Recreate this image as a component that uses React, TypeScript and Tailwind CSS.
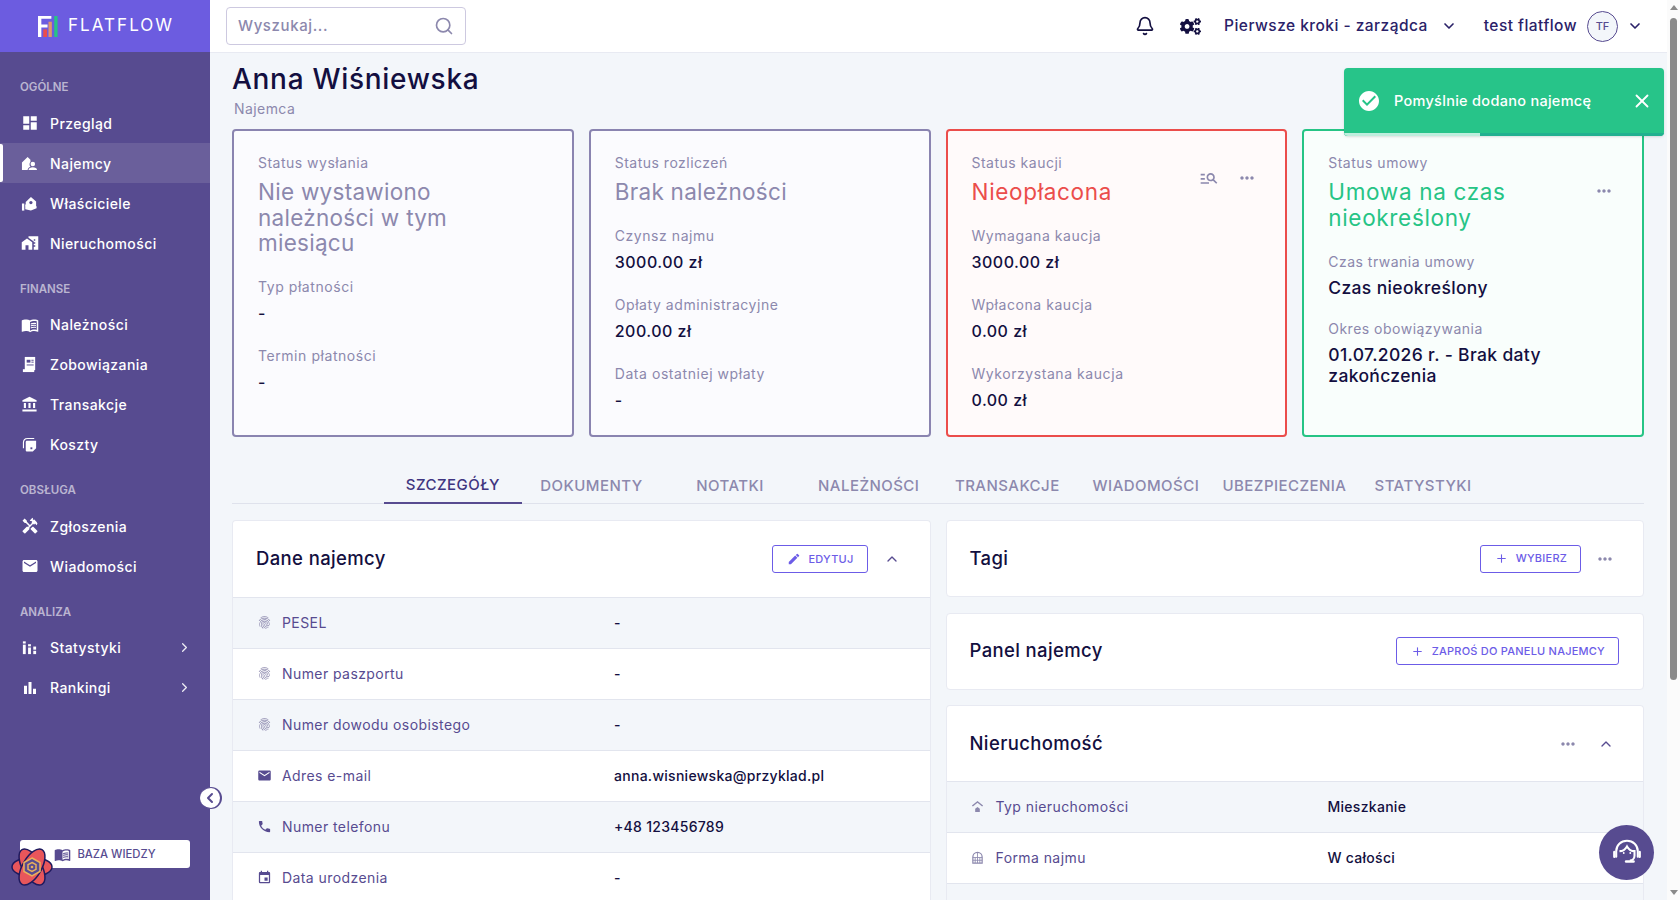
import { Bell, ChevronDown, ChevronLeft, ChevronRight, ChevronUp, Plus, Search, X } from "lucide-react";
import { FaCogs } from "react-icons/fa";
import {
  MdAccountBalance,
  MdBarChart,
  MdCheckCircle,
  MdDashboard,
  MdEdit,
  MdEmail,
  MdEvent,
  MdFingerprint,
  MdHandyman,
  MdHomeWork,
  MdManageSearch,
  MdMenuBook,
  MdMoreHoriz,
  MdPhone,
} from "react-icons/md";
import type { ReactNode } from "react";

const TenantIcon = () => (
  <svg viewBox="0 0 18 18" className="w-[17px] h-[17px]" fill="white">
    <path d="M1 16V8l6-6 3 3v2.5a3.4 3.4 0 0 0-1 2.5c0 1 .4 1.8 1 2.4-1.6.5-3 1.6-3 3.6z" />
    <circle cx="12.5" cy="9.5" r="2.4" />
    <path d="M8 16c0-2 2.2-3 4.5-3s4.5 1 4.5 3z" />
  </svg>
);

const OwnerIcon = () => (
  <svg viewBox="0 0 18 18" className="w-[17px] h-[17px]" fill="white">
    <path d="M5 7.5 10.5 2 16 7v6l-6 1.5L5 12z" />
    <circle cx="10.5" cy="8" r="1.7" fill="#574b90" />
    <rect x="1" y="9" width="2.5" height="7.5" />
    <path d="M4.5 10h3l4 2h5v2l-6 2.5-6-1.5z" />
  </svg>
);

const BillIcon = () => (
  <svg viewBox="0 0 18 18" className="w-[17px] h-[17px]" fill="white">
    <path d="M4 1h11v14H4z" />
    <rect x="6" y="4" width="4" height="3" fill="#574b90" />
    <rect x="11" y="4" width="2.4" height="1" fill="#574b90" />
    <rect x="11" y="6" width="2.4" height="1" fill="#574b90" />
    <rect x="6" y="9" width="7.4" height="1" fill="#574b90" />
    <path d="M2 14h12v3H2z" />
  </svg>
);

const CostIcon = () => (
  <svg viewBox="0 0 18 18" className="w-[17px] h-[17px]" fill="white">
    <path d="M2 7c0-3 1.500-5 5-5h7v1.300H7C4.500 3.300 3.200 5 3.200 7v6H2z" />
    <path d="M5 6.500c0-1 .6-1.500 1.500-1.500H16v8l-3.500 3.500H6.500C5.600 16.500 5 16 5 15z" />
    <rect x="10" y="12" width="2" height="2" fill="#574b90" />
  </svg>
);

const StatsIcon = () => (
  <svg viewBox="0 0 18 18" className="w-[17px] h-[17px]" fill="white">
    <rect x="2" y="6" width="3" height="10" />
    <rect x="2" y="2.500" width="3" height="2.300" />
    <rect x="7.500" y="9" width="3" height="7" />
    <rect x="7.500" y="5.500" width="3" height="2.300" />
    <rect x="13" y="12.500" width="3" height="3.500" />
    <rect x="13" y="8" width="3" height="3.300" />
  </svg>
);

const Logo = () => (
  <svg viewBox="0 0 22 22" className="w-[21px] h-[21px]">
    <path d="M0 0h14v3H3.500v6H10v3H3.500v10H0z" fill="white" />
    <rect x="5.500" y="14" width="4" height="8" fill="#eb4d4b" />
    <rect x="11" y="6" width="3.500" height="16" fill="#e4946a" />
    <rect x="17" y="0" width="3.500" height="22" fill="#26c485" />
  </svg>
);

const Flower = () => (
  <svg viewBox="0 0 44 44" className="w-[44px] h-[44px]">
    <g fill="#e8565b" stroke="#1f1a5e" strokeWidth="1.500">
      <ellipse cx="22" cy="22" rx="20" ry="9.500" />
      <ellipse cx="22" cy="22" rx="20" ry="9.500" transform="rotate(60 22 22)" />
      <ellipse cx="22" cy="22" rx="20" ry="9.500" transform="rotate(120 22 22)" />
    </g>
    <circle cx="22" cy="22" r="9" fill="#e8565b" />
    <path d="M22 13l8 4.500v9L22 31l-8-4.500v-9z" fill="#574b90" stroke="#e9b15c" strokeWidth="1.500" />
    <path d="M22 17.500l4 2.200v4.600l-4 2.200-4-2.200v-4.600z" fill="none" stroke="#e9b15c" strokeWidth="1.500" />
    <circle cx="22" cy="22" r="1.300" fill="#e9b15c" />
  </svg>
);

const SupportIcon = () => (
  <svg viewBox="0 0 32 32" className="w-[30px] h-[30px]" fill="none" stroke="white" strokeWidth="2.200">
    <path d="M4.500 20V14C4.500 7.500 9.500 3 16 3s11.500 4.500 11.500 11v6" strokeLinecap="round" />
    <path d="M8 14c3.500 0 6-1.500 8-5 2 3.500 4.500 5 8 5v5c0 2.500-2 5-5 5" />
    <path d="M2.500 15v5M29.500 15v5" strokeLinecap="round" strokeWidth="2.600" />
    <path d="M15 25h8" strokeLinecap="round" strokeWidth="2.600" />
    <circle cx="12.500" cy="16" r="1" fill="white" stroke="none" />
    <circle cx="19.500" cy="16" r="1" fill="white" stroke="none" />
  </svg>
);

const PropertyTypeIcon = () => (
  <svg viewBox="0 0 14 14" className="w-[13px] h-[13px]" fill="#8c88ad">
    <path d="M7 1 1 6l1 1 5-4 5 4 1-1z" />
    <path d="M7 7.500 4.500 9.500V13h5V9.500z" />
  </svg>
);

const RentFormIcon = () => (
  <svg viewBox="0 0 14 14" className="w-[13px] h-[13px]" fill="none" stroke="#8c88ad" strokeWidth="1.300">
    <path d="M2 13V6.500a5 5 0 0 1 10 0V13z" />
    <path d="M7 2v11M2 7h10M2 10h10M4.500 7v6M9.500 7v6" strokeWidth="0.900" />
  </svg>
);

type NavItem = { icon: ReactNode; label: string; active?: boolean; more?: boolean };

const navSections: { title: string; items: NavItem[] }[] = [
  {
    title: "OGÓLNE",
    items: [
      { icon: <MdDashboard size={18} />, label: "Przegląd" },
      { icon: <TenantIcon />, label: "Najemcy", active: true },
      { icon: <OwnerIcon />, label: "Właściciele" },
      { icon: <MdHomeWork size={18} />, label: "Nieruchomości" },
    ],
  },
  {
    title: "FINANSE",
    items: [
      { icon: <MdMenuBook size={18} />, label: "Należności" },
      { icon: <BillIcon />, label: "Zobowiązania" },
      { icon: <MdAccountBalance size={17} />, label: "Transakcje" },
      { icon: <CostIcon />, label: "Koszty" },
    ],
  },
  {
    title: "OBSŁUGA",
    items: [
      { icon: <MdHandyman size={18} />, label: "Zgłoszenia" },
      { icon: <MdEmail size={18} />, label: "Wiadomości" },
    ],
  },
  {
    title: "ANALIZA",
    items: [
      { icon: <StatsIcon />, label: "Statystyki", more: true },
      { icon: <MdBarChart size={18} />, label: "Rankingi", more: true },
    ],
  },
];

const tabs = ["SZCZEGÓŁY", "DOKUMENTY", "NOTATKI", "NALEŻNOŚCI", "TRANSAKCJE", "WIADOMOŚCI", "UBEZPIECZENIA", "STATYSTYKI"];

function Sidebar() {
  return (
    <aside className="w-[210px] shrink-0 h-full flex flex-col bg-[#574b90] relative z-10">
      <div className="h-[52px] shrink-0 bg-[#6c5ce0] flex items-center pl-[38px] gap-[9px]">
        <Logo />
        <span className="text-white text-[17px] tracking-[0.12em] font-normal">FLATFLOW</span>
      </div>
      <nav className="flex flex-col pt-[28px]">
        {navSections.map((section) => (
          <div key={section.title} className="mb-[18.500px]">
            <div className="h-[16px] flex items-center pl-[20px] text-[11.500px] font-semibold text-white/60 mb-[7px]">
              {section.title}
            </div>
            {section.items.map((item) => (
              <div
                key={item.label}
                className={`relative h-[40px] flex items-center pl-[21px] pr-[18px] text-white text-[14px] font-medium ${
                  item.active ? "bg-[#6a5f9b]" : ""
                }`}
              >
                {item.active && <span className="absolute left-0 top-px bottom-px w-[3px] bg-white rounded-r-[2px]" />}
                <span className="w-[29px] flex items-center">{item.icon}</span>
                <span className="flex-1 tracking-[0.03em]">{item.label}</span>
                {item.more && <ChevronRight className="w-[15px] h-[15px] text-white/90" />}
              </div>
            ))}
          </div>
        ))}
      </nav>
      <div className="mt-auto mb-[32px] mx-[20px] h-[28px] relative bg-white rounded-[3px] flex items-center justify-center gap-[6px] text-[#574b90] text-[11.300px] font-medium">
        <MdMenuBook size={17} />
        BAZA WIEDZY
        <span className="absolute -left-[10px] top-[5px]">
          <Flower />
        </span>
      </div>
      <button className="absolute right-[-12px] top-[787px] w-[22px] h-[22px] rounded-full bg-white border-r-2 border-b border-t border-[#574b90] flex items-center justify-center text-[#574b90]">
        <ChevronLeft className="w-[16px] h-[16px]" strokeWidth={3} />
      </button>
    </aside>
  );
}

function TopBar() {
  return (
    <header className="h-[53px] shrink-0 bg-white border-b border-[#e8eaf2] flex items-center pl-[16px] pr-[24px]">
      <div className="w-[240px] h-[38px] border border-[#cdc9e0] rounded-[4px] flex items-center justify-between pl-[11px] pr-[11px]">
        <span className="text-[15px] tracking-[0.04em] font-medium text-[#8c88ad]">Wyszukaj...</span>
        <Search className="w-[20px] h-[20px] text-[#8c88ad]" />
      </div>
      <div className="ml-auto flex items-center text-[#2a2168] text-[15.500px] font-medium">
        <Bell className="w-[20px] h-[20px] text-[#130f40]" />
        <FaCogs className="ml-[25px] w-[21px] h-[21px] text-[#130f40]" />
        <span className="ml-[23px] tracking-[0.03em]">Pierwsze kroki - zarządca</span>
        <ChevronDown className="ml-[13px] w-[16px] h-[16px]" strokeWidth={2.500} />
        <span className="ml-[27px] tracking-[0.03em]">test flatflow</span>
        <span className="ml-[10px] w-[31px] h-[31px] rounded-full border border-[#574b90] bg-[#f3f6fa] flex items-center justify-center text-[11px] font-medium text-[#574b90]">
          TF
        </span>
        <ChevronDown className="ml-[9px] w-[16px] h-[16px]" strokeWidth={2.500} />
      </div>
    </header>
  );
}

function Field({ label, value, large }: { label: string; value: string; large?: boolean }) {
  if (large) {
    return (
      <div className="mt-[20px]">
        <div className="text-[14px] leading-[21px] tracking-[0.035em] text-[#8c88ad]">{label}</div>
        <div className="mt-[5px] text-[17.500px] leading-[21px] tracking-[0.02em] font-medium text-[#130f40]">{value}</div>
      </div>
    );
  }
  return (
    <div className="mt-[19px]">
      <div className="text-[14px] leading-[21px] tracking-[0.04em] text-[#8c88ad]">{label}</div>
      <div className="mt-[4px] text-[16px] leading-[25px] tracking-[0.03em] font-medium text-[#130f40]">{value}</div>
    </div>
  );
}

function StatusCard({
  label,
  title,
  titleClass,
  border,
  bg,
  actions,
  children,
}: {
  label: string;
  title: ReactNode;
  titleClass: string;
  border: string;
  bg: string;
  actions?: ReactNode;
  children: ReactNode;
}) {
  return (
    <div className={`h-[308px] border-2 rounded-[4px] pl-[24px] pr-[28px] pt-[21px] ${border} ${bg}`}>
      <div className="flex items-center justify-between pb-px">
        <div>
          <div className="text-[14px] leading-[21px] tracking-[0.035em] text-[#8c88ad]">{label}</div>
          <div className={`mt-[6px] text-[22.500px] leading-[25.500px] font-normal ${titleClass}`}>{title}</div>
        </div>
        {actions}
      </div>
      {children}
    </div>
  );
}

function Dots() {
  return <MdMoreHoriz size={20} className="text-[#8c88ad]" />;
}

function OutlineButton({ icon, children }: { icon: ReactNode; children: ReactNode }) {
  return (
    <button className="h-[28px] pl-[14px] pr-[13px] border border-[#6c5ce7] rounded-[3px] flex items-center gap-[8px] text-[#6c5ce7] text-[11px] font-medium tracking-[0.02em]">
      {icon}
      {children}
    </button>
  );
}

function PanelHeader({ title, compact, children }: { title: string; compact?: boolean; children?: ReactNode }) {
  return (
    <div className={`${compact ? "h-[75px]" : "h-[76px]"} flex items-center justify-between pl-[23px] pr-[24px]`}>
      <h2 className="text-[18.500px] font-medium text-[#130f40] tracking-[0.02em]">{title}</h2>
      <div className="flex items-center">{children}</div>
    </div>
  );
}

function Row({ icon, label, value, alt }: { icon: ReactNode; label: string; value: string; alt?: boolean }) {
  return (
    <div className={`h-[51px] shrink-0 flex items-center border-t border-[#e2e5ee] ${alt ? "bg-[#f3f6fa]" : "bg-white"}`}>
      <div className="w-[381px] shrink-0 pl-[24px] pb-px flex items-center text-[14px] text-[#574b90]">
        <span className="w-[25px] flex items-center">{icon}</span>
        <span className="tracking-[0.03em]">{label}</span>
      </div>
      <span className="pb-px text-[14px] font-medium text-[#130f40] tracking-[0.02em]">{value}</span>
    </div>
  );
}

const fingerprint = <MdFingerprint size={15} className="text-[#8c88ad]" />;

export default function App() {
  return (
    <div className="w-full h-screen flex overflow-hidden relative bg-[#f3f6fa] font-['Inter',sans-serif]">
      <Sidebar />
      <div className="flex-1 min-w-0 flex flex-col h-full">
        <TopBar />
        <main className="flex-1 min-h-0 overflow-hidden pl-[22px] pr-[23px] pt-[6px]">
          <h1 className="mb-px text-[28px] leading-[40px] font-medium text-[#130f40] tracking-[0.025em]">Anna Wiśniewska</h1>
          <div className="text-[14px] leading-[18px] tracking-[0.03em] text-[#8c88ad] pl-[2px]">Najemca</div>

          <section className="mt-[11px] grid grid-cols-4 gap-[15px]">
            <StatusCard
              label="Status wysłania"
              title={
                <>
                  Nie wystawiono
                  <br />
                  należności w tym
                  <br />
                  miesiącu
                </>
              }
              titleClass="text-[#8c88ad] tracking-[0.012em]"
              border="border-[#8a84b0]"
              bg="bg-[#fbfbfe]"
            >
              <Field label="Typ płatności" value="-" />
              <Field label="Termin płatności" value="-" />
            </StatusCard>
            <StatusCard
              label="Status rozliczeń"
              title="Brak należności"
              titleClass="text-[#8c88ad] tracking-[0.012em]"
              border="border-[#8a84b0]"
              bg="bg-[#fbfbfe]"
            >
              <Field label="Czynsz najmu" value="3000.00 zł" />
              <Field label="Opłaty administracyjne" value="200.00 zł" />
              <Field label="Data ostatniej wpłaty" value="-" />
            </StatusCard>
            <StatusCard
              label="Status kaucji"
              title="Nieopłacona"
              titleClass="text-[#eb4d4b] tracking-[0.03em]"
              border="border-[#eb4d4b]"
              bg="bg-[#fffafa]"
              actions={
                <div className="flex items-center gap-[18px] text-[#8c88ad]">
                  <MdManageSearch size={20} />
                  <Dots />
                </div>
              }
            >
              <Field label="Wymagana kaucja" value="3000.00 zł" />
              <Field label="Wpłacona kaucja" value="0.00 zł" />
              <Field label="Wykorzystana kaucja" value="0.00 zł" />
            </StatusCard>
            <StatusCard
              label="Status umowy"
              title={
                <>
                  Umowa na czas
                  <br />
                  nieokreślony
                </>
              }
              titleClass="text-[#26c485] tracking-[0.03em]"
              border="border-[#26c485]"
              bg="bg-[#f9fefc]"
              actions={<Dots />}
            >
              <Field large label="Czas trwania umowy" value="Czas nieokreślony" />
              <Field large label="Okres obowiązywania" value="01.07.2026 r. - Brak daty zakończenia" />
            </StatusCard>
          </section>

          <div className="mt-[29px] h-[38px] border-b border-[#dfe2ec] flex justify-center">
            {tabs.map((tab, i) => (
              <div
                key={tab}
                className={`w-[138.600px] h-[38px] pt-[2px] flex items-center justify-center text-[15px] font-medium tracking-[0.03em] ${
                  i === 0 ? "text-[#3f3580] border-b-2 border-[#574b90]" : "text-[#8c88ad]"
                }`}
              >
                {tab}
              </div>
            ))}
          </div>

          <section className="mt-[16px] grid grid-cols-2 gap-[15px] items-start">
            <div className="bg-white rounded-[4px] border border-[#e8eaf2] border-b-0 overflow-hidden flex flex-col">
              <PanelHeader title="Dane najemcy">
                <OutlineButton icon={<MdEdit size={14} />}>EDYTUJ</OutlineButton>
                <ChevronUp className="ml-[16px] mr-[6px] w-[16px] h-[16px] text-[#574b90]" />
              </PanelHeader>
              <Row alt icon={fingerprint} label="PESEL" value="-" />
              <Row icon={fingerprint} label="Numer paszportu" value="-" />
              <Row alt icon={fingerprint} label="Numer dowodu osobistego" value="-" />
              <Row icon={<MdEmail size={15} />} label="Adres e-mail" value="anna.wisniewska@przyklad.pl" />
              <Row alt icon={<MdPhone size={15} />} label="Numer telefonu" value="+48 123456789" />
              <Row icon={<MdEvent size={15} />} label="Data urodzenia" value="-" />
            </div>

            <div className="flex flex-col gap-[15.500px]">
              <div className="bg-white rounded-[4px] border border-[#e8eaf2]">
                <PanelHeader compact title="Tagi">
                  <OutlineButton icon={<Plus className="w-[13px] h-[13px]" />}>WYBIERZ</OutlineButton>
                  <span className="ml-[14px] mr-[4px]">
                    <Dots />
                  </span>
                </PanelHeader>
              </div>
              <div className="bg-white rounded-[4px] border border-[#e8eaf2]">
                <PanelHeader compact title="Panel najemcy">
                  <OutlineButton icon={<Plus className="w-[13px] h-[13px]" />}>ZAPROŚ DO PANELU NAJEMCY</OutlineButton>
                </PanelHeader>
              </div>
              <div className="bg-white rounded-[4px] border border-[#e8eaf2] border-b-0 overflow-hidden flex flex-col">
                <PanelHeader compact title="Nieruchomość">
                  <Dots />
                  <ChevronUp className="ml-[20px] mr-[5px] w-[16px] h-[16px] text-[#574b90]" />
                </PanelHeader>
                <Row alt icon={<PropertyTypeIcon />} label="Typ nieruchomości" value="Mieszkanie" />
                <Row icon={<RentFormIcon />} label="Forma najmu" value="W całości" />
                <Row alt icon={<RentFormIcon />} label="" value="" />
              </div>
            </div>
          </section>
        </main>
      </div>

      {/* scrollbar */}
      <div className="w-[13px] shrink-0 h-full bg-[#fbfbfb] flex flex-col items-center pt-[5px] pb-[5px] relative z-10">
        <span className="w-0 h-0 border-x-[4px] border-x-transparent border-b-[5px] border-b-[#8a8a8a]" />
        <span className="mt-[8px] w-[7px] h-[662px] rounded-full bg-[#8a8a8a]" />
        <span className="mt-auto w-0 h-0 border-x-[4px] border-x-transparent border-t-[5px] border-t-[#8a8a8a]" />
      </div>

      {/* toast */}
      <div className="absolute left-[1344px] top-[68px] w-[320px] h-[68px] z-20 bg-[#27c489] rounded-[4px] overflow-hidden flex items-center pl-[13px] pr-[11px] pb-[3px] text-white shadow-sm">
        <MdCheckCircle size={24} />
        <span className="ml-[13px] text-[14.500px] tracking-[0.02em] font-medium">Pomyślnie dodano najemcę</span>
        <X className="ml-auto w-[22px] h-[22px]" />
        <span className="absolute left-0 bottom-0 h-[3px] w-full bg-[#22b08f]" />
        <span className="absolute left-0 bottom-0 h-[3px] w-[136px] bg-[#bfeedd]" />
      </div>

      {/* support button */}
      <button className="absolute left-[1599px] top-[825px] z-20 w-[55px] h-[55px] rounded-full bg-[#574b90] flex items-center justify-center">
        <SupportIcon />
      </button>
    </div>
  );
}
